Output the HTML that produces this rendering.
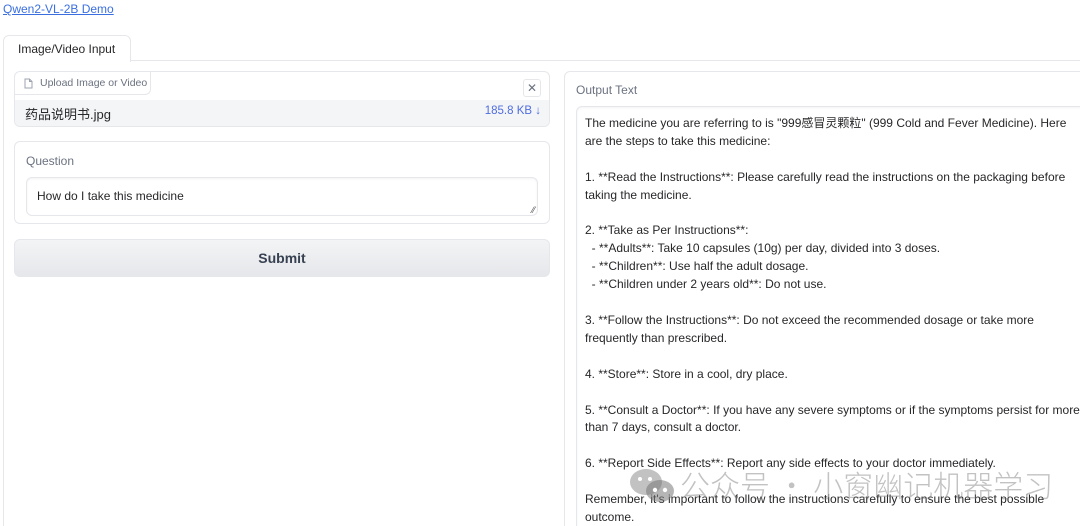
<!DOCTYPE html>
<html><head><meta charset="utf-8"><style>
*{box-sizing:border-box;margin:0;padding:0}
html,body{width:1080px;height:526px;overflow:hidden}
body{background:#fff;font-family:"Liberation Sans","Noto Sans CJK SC",sans-serif;color:#27272a;position:relative}
.a{position:absolute}
a{color:#3b6fe0}
.box{border:1px solid #e5e7eb;border-radius:6px;background:#fff}
.out{font-size:12px;line-height:17.9px;color:#27272a;white-space:pre-wrap}
</style></head><body>
<div class="a" style="left:3px;top:2px;font-size:12px"><a href="#">Qwen2-VL-2B Demo</a></div>
<div class="a" style="left:3px;top:60px;width:1077px;border-top:1px solid #e5e7eb"></div>
<div class="a" style="left:3px;top:35px;width:128px;height:27px;border:1px solid #e5e7eb;border-bottom:none;border-radius:6px 6px 0 0;background:#fff;font-size:12px;padding:6px 0 0 14px">Image/Video Input</div>
<div class="a" style="left:3px;top:61px;height:465px;border-left:1px solid #e5e7eb"></div>

<div class="a box" style="left:14px;top:71px;width:536px;height:56px;overflow:hidden">
 <div class="a" style="left:0;top:0;width:136px;height:23px;border:1px solid #e5e7eb;border-top:none;border-left:none;border-radius:0 0 6px 0;font-size:10.5px;color:#6b7280;padding:5px 0 0 25px">Upload Image or Video</div>
 <svg class="a" style="left:9px;top:6px" width="9" height="11" viewBox="0 0 9 11"><path d="M1 1h4.5l2.5 2.5V10H1z M5.5 1v2.5H8" fill="none" stroke="#9ca3af" stroke-width="1"/></svg>
 <div class="a" style="left:508px;top:7px;width:18px;height:18px;border:1px solid #e5e7eb;border-radius:3px;font-size:12px;color:#6b7280;text-align:center;line-height:16px">✕</div>
 <div class="a" style="left:0;top:28px;width:536px;height:27px;background:#f4f5f7;font-size:13px;padding:4px 0 0 10px">药品说明书.jpg<span style="position:absolute;right:10px;top:5px;color:#4f6de0;font-size:11.5px">185.8 KB ↓</span></div>
</div>

<div class="a box" style="left:14px;top:141px;width:536px;height:83px">
 <div class="a" style="left:11px;top:12px;font-size:12px;color:#6b7280">Question</div>
 <div class="a" style="left:11px;top:35px;width:512px;height:39px;border:1px solid #e5e7eb;border-radius:6px;font-size:12px;padding:11px 0 0 10px;box-shadow:inset 0 1px 2px rgba(0,0,0,.05)">How do I take this medicine
 <span style="position:absolute;right:2px;bottom:0;font-size:9px;color:#555">⁄⁄</span></div>
</div>

<div class="a" style="left:14px;top:239px;width:536px;height:38px;border:1px solid #e5e7eb;border-radius:6px;background:linear-gradient(#f3f4f6,#e6e7ea);font-size:14px;font-weight:bold;color:#374151;text-align:center;line-height:36px">Submit</div>

<div class="a box" style="left:564px;top:71px;width:530px;height:470px">
 <div class="a" style="left:11px;top:11px;font-size:12px;color:#6b7280">Output Text</div>
 <div class="a" style="left:11px;top:34px;width:520px;height:440px;border:1px solid #e5e7eb;border-radius:6px;box-shadow:inset 0 1px 2px rgba(0,0,0,.05)"></div>
</div>
<div class="a out" style="left:585px;top:115px;width:495px">The medicine you are referring to is "999感冒灵颗粒" (999 Cold and Fever Medicine). Here
are the steps to take this medicine:

1. **Read the Instructions**: Please carefully read the instructions on the packaging before
taking the medicine.

2. **Take as Per Instructions**:
  - **Adults**: Take 10 capsules (10g) per day, divided into 3 doses.
  - **Children**: Use half the adult dosage.
  - **Children under 2 years old**: Do not use.

3. **Follow the Instructions**: Do not exceed the recommended dosage or take more
frequently than prescribed.

4. **Store**: Store in a cool, dry place.

5. **Consult a Doctor**: If you have any severe symptoms or if the symptoms persist for more
than 7 days, consult a doctor.

6. **Report Side Effects**: Report any side effects to your doctor immediately.

Remember, it's important to follow the instructions carefully to ensure the best possible
outcome.</div>
<svg class="a" style="left:628px;top:467px" width="48" height="38" viewBox="0 0 48 38"><ellipse cx="18" cy="15" rx="16" ry="13" fill="rgba(120,120,120,.45)"/><ellipse cx="32" cy="24" rx="14" ry="11" fill="rgba(120,120,120,.55)"/><circle cx="27" cy="23" r="2.2" fill="#fff"/><circle cx="37" cy="23" r="2.2" fill="#fff"/><circle cx="12" cy="12" r="2" fill="#fff"/><circle cx="22" cy="12" r="2" fill="#fff"/></svg>
<div class="a" style="left:680px;top:464px;font-size:30px;line-height:40px;color:rgba(120,120,120,.45);font-family:'Noto Sans CJK SC',sans-serif;font-weight:300;white-space:nowrap">公众号 · 小窗幽记机器学习</div>
</body></html>
